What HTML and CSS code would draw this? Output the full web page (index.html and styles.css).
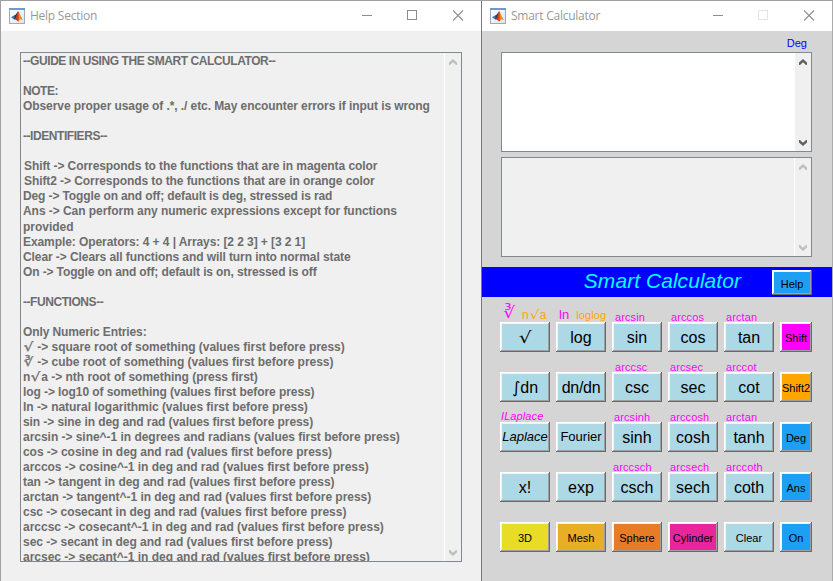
FILE: index.html
```html
<!DOCTYPE html>
<html lang="en">
<head>
<meta charset="utf-8">
<title>Smart Calculator</title>
<link rel="stylesheet" href="styles.css">
</head>
<body>
<svg class="defs" width="0" height="0">
  <defs>
    <linearGradient id="flame" x1="0" x2="1"><stop offset="0" stop-color="#8c1c10"/><stop offset=".45" stop-color="#e0481b"/><stop offset=".65" stop-color="#f5a328"/><stop offset="1" stop-color="#a82314"/></linearGradient>
    <linearGradient id="frame" x1="0" y1="0" x2="1" y2="1"><stop offset="0" stop-color="#fff"/><stop offset="1" stop-color="#dfe3e8"/></linearGradient>
    <symbol id="logo" viewBox="0 0 16 16">
      <rect x=".5" y=".5" width="15" height="15" fill="url(#frame)" stroke="#a3a9b2"/>
      <rect x="0" y="0" width="16" height="2" fill="#6d9ac6"/>
      <path d="M2 9.3 5.5 7.3 7.3 8.5 5.2 11.6Z" fill="#3978b5"/>
      <path d="M5.5 7.3C7 7 8 4 9.2 3.2L7.5 9.5 5.2 11.6Z" fill="#243b62"/>
      <path d="M9.2 3C10.6 4.2 11.7 9.5 14 12 12.3 11 11 10.8 9.6 13.5 8.4 14 7.8 10.8 5.2 11.5 7.8 9.5 8 4.5 9.2 3Z" fill="url(#flame)"/>
    </symbol>
    <symbol id="min" viewBox="0 0 11 11"><path d="M1 5.5h10" stroke="currentColor"/></symbol>
    <symbol id="max" viewBox="0 0 11 11"><rect x=".5" y=".5" width="9" height="9" fill="none" stroke="currentColor"/></symbol>
    <symbol id="close" viewBox="0 0 11 11"><path d="M0 .5l10 10M10 .5l-10 10" stroke="currentColor" stroke-width="1.1"/></symbol>
    <symbol id="up" viewBox="0 0 8 6"><path d="M0 6V3.6L4 0 8 3.6V6H7L4 3.3 1 6Z" fill="currentColor"/></symbol>
    <symbol id="down" viewBox="0 0 8 6"><path d="M0 0V2.4L4 6 8 2.4V0H7L4 2.7 1 0Z" fill="currentColor"/></symbol>
  </defs>
</svg>
<main class="desktop">
  <section class="window help">
    <header class="titlebar">
      <svg class="logo"><use href="#logo"/></svg><h1>Help Section</h1>
      <div class="controls"><svg><use href="#min"/></svg><svg><use href="#max"/></svg><svg><use href="#close"/></svg></div>
    </header>
    <div class="box guide">
      <div class="lines">
        <p class="caps">--GUIDE IN USING THE SMART CALCULATOR--</p><p></p>
        <p class="caps">NOTE:</p><p class="prose">Observe proper usage of .*, ./ etc. May encounter errors if input is wrong</p><p></p>
        <p class="caps">--IDENTIFIERS--</p><p></p>
        <p class="prose nudge">Shift -&gt; Corresponds to the functions that are in magenta color</p>
        <p class="prose nudge">Shift2 -&gt; Corresponds to the functions that are in orange color</p>
        <p class="toggle">Deg -&gt; Toggle on and off; default is deg, stressed is rad</p>
        <p class="tall">Ans -&gt; Can perform any numeric expressions except for functions</p>
        <p>provided</p>
        <p class="prose">Example: Operators: 4 + 4 | Arrays: [2 2 3] + [3 2 1]</p>
        <p class="prose">Clear -&gt; Clears all functions and will turn into normal state</p>
        <p class="toggle">On -&gt; Toggle on and off; default is on, stressed is off</p><p></p>
        <p class="caps">--FUNCTIONS--</p><p></p>
        <p class="toggle">Only Numeric Entries:</p>
        <p><span class="root">√</span> -&gt; square root of something (values first before press)</p>
        <p><span class="root">∛</span> -&gt; cube root of something (values first before press)</p>
        <p>n<span class="root">√</span>a -&gt; nth root of something (press first)</p>
        <p class="prose">log -&gt; log10 of something (values first before press)</p>
        <p>ln -&gt; natural logarithmic (values first before press)</p>
        <p class="prose">sin -&gt; sine in deg and rad (values first before press)</p>
        <p>arcsin -&gt; sine^-1 in degrees and radians (values first before press)</p>
        <p class="mid">cos -&gt; cosine in deg and rad (values first before press)</p>
        <p>arccos -&gt; cosine^-1 in deg and rad (values first before press)</p>
        <p class="mid">tan -&gt; tangent in deg and rad (values first before press)</p>
        <p>arctan -&gt; tangent^-1 in deg and rad (values first before press)</p>
        <p>csc -&gt; cosecant in deg and rad (values first before press)</p>
        <p class="wide">arccsc -&gt; cosecant^-1 in deg and rad (values first before press)</p>
        <p>sec -&gt; secant in deg and rad (values first before press)</p>
        <p class="wide">arcsec -&gt; secant^-1 in deg and rad (values first before press)</p>
      </div>
      <div class="scroll off line"><svg><use href="#up"/></svg><svg><use href="#down"/></svg></div>
    </div>
  </section>
  <section class="window calc">
    <header class="titlebar">
      <svg class="logo"><use href="#logo"/></svg><h1>Smart Calculator</h1>
      <div class="controls"><svg><use href="#min"/></svg><svg class="faint"><use href="#max"/></svg><svg><use href="#close"/></svg></div>
    </header>
    <div class="mode">Deg</div>
    <div class="box input"><div class="scroll"><svg><use href="#up"/></svg><svg><use href="#down"/></svg></div></div>
    <div class="box output"><div class="scroll off line"><svg><use href="#up"/></svg><svg><use href="#down"/></svg></div></div>
    <div class="banner"><h2>Smart Calculator</h2><button class="small blue">Help</button></div>
    <div class="keys">
      <div class="cell"><div class="label pair"><span class="cube">∛</span><span class="alt nth">n<span class="root">√</span>a</span></div><button><span class="root">√</span></button></div>
      <div class="cell"><div class="label pair"><span class="ln">ln</span><span class="alt">loglog</span></div><button>log</button></div>
      <div class="cell"><div class="label">arcsin</div><button>sin</button></div>
      <div class="cell"><div class="label">arccos</div><button>cos</button></div>
      <div class="cell"><div class="label near">arctan</div><button>tan</button></div>
      <div class="cell"><div class="label"></div><button class="small magenta">Shift</button></div>

      <div class="cell"><div class="label"></div><button><span class="integral">∫</span>dn</button></div>
      <div class="cell"><div class="label"></div><button class="tight">dn/dn</button></div>
      <div class="cell"><div class="label">arccsc</div><button>csc</button></div>
      <div class="cell"><div class="label near">arcsec</div><button>sec</button></div>
      <div class="cell"><div class="label near">arccot</div><button>cot</button></div>
      <div class="cell"><div class="label"></div><button class="small orange">Shift2</button></div>

      <div class="cell"><div class="label ital">ILaplace</div><button class="medium ital">Laplace</button></div>
      <div class="cell"><div class="label"></div><button class="medium">Fourier</button></div>
      <div class="cell"><div class="label near">arcsinh</div><button>sinh</button></div>
      <div class="cell"><div class="label near">arccosh</div><button>cosh</button></div>
      <div class="cell"><div class="label near">arctan</div><button>tanh</button></div>
      <div class="cell"><div class="label"></div><button class="small blue">Deg</button></div>

      <div class="cell"><div class="label"></div><button>x!</button></div>
      <div class="cell"><div class="label"></div><button>exp</button></div>
      <div class="cell"><div class="label edge">arccsch</div><button>csch</button></div>
      <div class="cell"><div class="label near">arcsech</div><button>sech</button></div>
      <div class="cell"><div class="label near">arccoth</div><button>coth</button></div>
      <div class="cell"><div class="label"></div><button class="small blue up">Ans</button></div>

      <div class="cell"><div class="label"></div><button class="small yellow up">3D</button></div>
      <div class="cell"><div class="label"></div><button class="small gold up">Mesh</button></div>
      <div class="cell"><div class="label"></div><button class="small rust up">Sphere</button></div>
      <div class="cell"><div class="label"></div><button class="small pink up">Cylinder</button></div>
      <div class="cell"><div class="label"></div><button class="small up">Clear</button></div>
      <div class="cell"><div class="label"></div><button class="small blue">On</button></div>
    </div>
  </section>
</main>
</body>
</html>
```
FILE: styles.css
```css
* { box-sizing: border-box; }
body { margin: 0; font-family: "Liberation Sans", Arial, sans-serif; }
h1, h2, p { margin: 0; }
.defs { display: block; }
.desktop { display: flex; width: 833px; height: 581px; overflow: hidden; border-top: 1px solid #a0a0a0; }
.window { height: 580px; }
.help { width: 481px; background: #f0f0f0; border-left: 1px solid #a0a0a0; }
.calc { width: 352px; background: #d5d5d5; border-left: 1px solid #787878; border-right: 1px solid #ababab; }
.titlebar { display: flex; align-items: center; height: 30px; background: #fff; padding: 0 17px 2px 8px; color: #999; }
.logo { width: 16px; height: 16px; margin-top: 1px; }
.titlebar h1 { margin-left: 5px; font: 400 12px/16px "Open Sans", "Noto Sans", sans-serif; letter-spacing: -0.25px; white-space: nowrap; margin-top: 1px; }
.controls { display: flex; gap: 35px; margin-left: auto; color: #8d8d8d; }
.controls svg { width: 11px; height: 11px; }
.controls .faint { color: #e5e5e5; }
.box { display: flex; border: 1px solid #828790; overflow: hidden; }
.guide { width: 442px; height: 510px; margin: 21px 0 0 19px; }
.lines { flex: 1; padding: 1px 0 0 2px; color: #6d6d6d; font-size: 12px; font-weight: 700; white-space: nowrap; }
.lines p { height: 15px; line-height: 15px; letter-spacing: -0.03px; }
.lines .tall { height: 16px; letter-spacing: -0.05px; }
.lines .nudge { padding-left: 1px; }
.lines .caps { letter-spacing: -0.44px; }
.lines .prose { letter-spacing: -0.08px; }
.lines .mid { letter-spacing: -0.05px; }
.lines .toggle { letter-spacing: -0.12px; }
.lines .wide { letter-spacing: 0; }
.root { display: inline-block; font-family: "DejaVu Sans", sans-serif; font-size: 16px; line-height: 16px; transform: scaleX(1.25); }
.integral { font-family: "DejaVu Sans", sans-serif; font-size: 16px; }
.lines .root { width: 11px; text-align: center; font-weight: 400; font-size: 12px; line-height: 13px; -webkit-text-stroke: 0.3px; }
.scroll { display: flex; flex-direction: column; align-items: center; justify-content: space-between; width: 16px; padding: 6px 0 5px; background: #f0f0f0; color: #606060; }
.scroll svg { width: 8px; height: 6px; }
.scroll.off { color: #bfbfbf; }
.scroll.line { width: 17px; border-left: 1px solid #fff; }
.mode { height: 21px; padding: 5px 25px 0 0; text-align: right; font-size: 11px; line-height: 14px; color: #00f; }
.box.input, .box.output { width: 311px; height: 100px; margin-left: 19px; justify-content: flex-end; }
.input { background: #fff; }
.output { background: #f0f0f0; margin-top: 5px; }
.banner { display: flex; align-items: center; height: 30px; margin-top: 10px; padding-right: 20px; background: #00f; justify-content: flex-end; }
.banner h2 { margin-right: 31px; padding-bottom: 2px; font-size: 21px; line-height: 26px; font-weight: 400; font-style: italic; letter-spacing: 0.05px; color: #0ff; white-space: nowrap; }
.banner button { width: 40px; height: 25px; margin-top: 1px; }
button { display: flex; align-items: center; justify-content: center; width: 100%; height: 30px; margin: 0; padding: 2px 0 0; border: 0; background: #add8e6; color: #000; font: 16px/18px "Liberation Sans", Arial, sans-serif; white-space: nowrap;
  box-shadow: inset -1px -1px #696969, inset 1px 1px #fff, inset -2px -2px #a0a0a0, inset 2px 2px #f3f3f3; }
.keys { display: grid; grid-template-columns: repeat(5, 50px) 32px; column-gap: 6px; margin: 5px 0 0 18px; }
.cell { height: 50px; }
.label { display: flex; align-items: flex-end; height: 20px; padding: 0 0 0 3px; color: #f0f; font-size: 11px; line-height: 10px; letter-spacing: 0.1px; white-space: nowrap; }
.label.near { padding-left: 2px; }
.label.edge { padding-left: 1px; }
.label.ital { padding-left: 1px; padding-bottom: 1px; }
.ital { font-style: italic; }
.label.pair { padding: 0 0 2px 3px; gap: 7px; }
.alt { color: orange; }
.nth { font-size: 12px; }
.nth .root { width: 11px; text-align: center; font-size: 12px; line-height: 10px; }
.cube { width: 12px; padding-left: 1px; font: 16px/15px "DejaVu Sans", sans-serif; transform: scaleX(1.15); }
.ln { font-size: 13px; }
.tight { letter-spacing: -0.3px; }
.medium { font-size: 13px; padding-top: 0; }
.small { font-size: 11px; padding-top: 2px; }
.small.up { padding-top: 1px; }
.blue { background: #1c9ff5; }
.magenta { background: #f0f; }
.orange { background: orange; }
.yellow { background: #e8dc26; }
.gold { background: #e8ae26; }
.rust { background: #e87c26; }
.pink { background: #e8269c; }
```
